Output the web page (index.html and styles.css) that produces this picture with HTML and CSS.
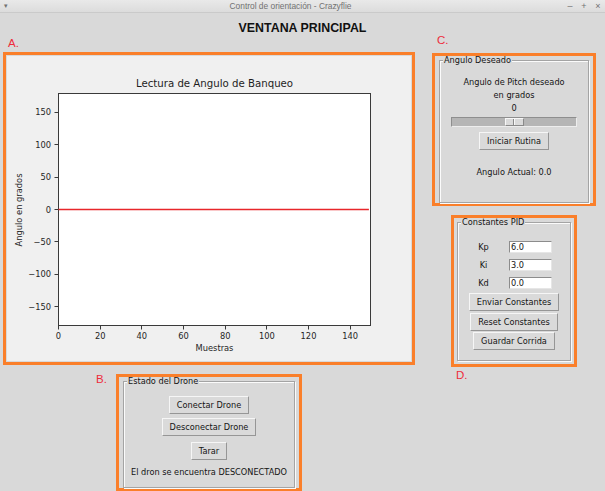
FILE: index.html
```html
<!DOCTYPE html>
<html lang="es">
<head>
<meta charset="utf-8">
<title>Control de orientación - Crazyflie</title>
<link rel="stylesheet" href="styles.css">
</head>
<body>
<div class="titlebar">
  <span class="tb-menu">▾</span>
  <span class="tb-title">Control de orientación - Crazyflie</span>
  <span class="tb-ctrls"><span>–</span><span>+</span><span>×</span></span>
</div>
<h1 class="heading">VENTANA PRINCIPAL</h1>
<div class="columns">
  <div class="col-left">
    <div class="mark mark-a">A.</div>
    <div class="box box-a">
      <div class="canvas">
        <svg class="plot" width="404" height="305" viewBox="7 56 404 305" xmlns="http://www.w3.org/2000/svg">
          <text class="p-title" x="214.5" y="87" text-anchor="middle">Lectura de Angulo de Banqueo</text>
          <rect x="58.5" y="93.5" width="312" height="232" fill="#ffffff" stroke="#3a3a3a" stroke-width="1"/>
          <line x1="58.5" y1="209.5" x2="368.9" y2="209.5" stroke="#e8262b" stroke-width="1.5"/>
          <g stroke="#3a3a3a" stroke-width="1">
            <line x1="54.5" y1="112.5" x2="58" y2="112.5"/>
            <line x1="54.5" y1="144.5" x2="58" y2="144.5"/>
            <line x1="54.5" y1="177.5" x2="58" y2="177.5"/>
            <line x1="54.5" y1="209.5" x2="58" y2="209.5"/>
            <line x1="54.5" y1="241.5" x2="58" y2="241.5"/>
            <line x1="54.5" y1="274.5" x2="58" y2="274.5"/>
            <line x1="54.5" y1="306.5" x2="58" y2="306.5"/>
            <line x1="58.5" y1="326" x2="58.5" y2="329.5"/>
            <line x1="100.5" y1="326" x2="100.5" y2="329.5"/>
            <line x1="141.5" y1="326" x2="141.5" y2="329.5"/>
            <line x1="183.5" y1="326" x2="183.5" y2="329.5"/>
            <line x1="225.5" y1="326" x2="225.5" y2="329.5"/>
            <line x1="266.5" y1="326" x2="266.5" y2="329.5"/>
            <line x1="308.5" y1="326" x2="308.5" y2="329.5"/>
            <line x1="350.5" y1="326" x2="350.5" y2="329.5"/>
          </g>
          <g class="p-tick" text-anchor="end">
            <text x="51" y="115.4">150</text>
            <text x="51" y="147.8">100</text>
            <text x="51" y="180.1">50</text>
            <text x="51" y="212.5">0</text>
            <text x="51" y="244.9">−50</text>
            <text x="51" y="277.2">−100</text>
            <text x="51" y="309.6">−150</text>
          </g>
          <g class="p-tick" text-anchor="middle">
            <text x="58.5" y="339">0</text>
            <text x="100.2" y="339">20</text>
            <text x="141.8" y="339">40</text>
            <text x="183.5" y="339">60</text>
            <text x="225.2" y="339">80</text>
            <text x="266.8" y="339">100</text>
            <text x="308.5" y="339">120</text>
            <text x="350.2" y="339">140</text>
          </g>
          <text class="p-label" x="214.5" y="350.7" text-anchor="middle">Muestras</text>
          <text class="p-label" x="19" y="213" text-anchor="middle" transform="rotate(-90 19 210)">Angulo en grados</text>
        </svg>
      </div>
    </div>
    <div class="row-b">
      <div class="mark mark-b">B.</div>
      <div class="box box-b">
        <fieldset class="frame">
          <legend>Estado del Drone</legend>
          <div class="frame-body body-b">
            <button class="btn">Conectar Drone</button>
            <button class="btn btn-b2">Desconectar Drone</button>
            <button class="btn btn-b3">Tarar</button>
            <div class="status">El dron se encuentra DESCONECTADO</div>
          </div>
        </fieldset>
      </div>
    </div>
  </div>
  <div class="col-right">
    <div class="mark mark-c">C.</div>
    <div class="box box-c">
      <fieldset class="frame">
        <legend>Angulo Deseado</legend>
        <div class="frame-body body-c">
          <div class="c-text">Angulo de Pitch deseado<br>en grados</div>
          <div class="c-text">0</div>
          <div class="scale"><div class="scale-handle"><div class="scale-grip"></div></div></div>
          <button class="btn btn-c">Iniciar Rutina</button>
          <div class="c-text c-actual">Angulo Actual: 0.0</div>
        </div>
      </fieldset>
    </div>
    <div class="box box-d">
      <fieldset class="frame">
        <legend>Constantes PID</legend>
        <div class="frame-body body-d">
          <div class="pid-grid">
            <span class="pid-label">Kp</span><span class="entry">6.0</span>
            <span class="pid-label">Ki</span><span class="entry">3.0</span>
            <span class="pid-label">Kd</span><span class="entry">0.0</span>
          </div>
          <button class="btn btn-d1">Enviar Constantes</button>
          <button class="btn btn-d2">Reset Constantes</button>
          <button class="btn btn-d3">Guardar Corrida</button>
        </div>
      </fieldset>
    </div>
    <div class="mark mark-d">D.</div>
  </div>
</div>
</body>
</html>
```
FILE: styles.css
```css
* { box-sizing: border-box; }
html, body { margin: 0; padding: 0; }
body {
  background: #d9d9d9;
  width: 605px;
  height: 491px;
  overflow: hidden;
  font-family: "DejaVu Sans", sans-serif;
  font-size: 8.2px;
  color: #141414;
}

/* title bar */
.titlebar {
  display: flex;
  align-items: center;
  height: 13px;
  background: linear-gradient(#e9e9e9, #dcdcdc);
  border-bottom: 1px solid #cacaca;
  color: #727272;
  font-family: "Liberation Sans", sans-serif;
  font-size: 8.4px;
  line-height: 12px;
}
.tb-menu { width: 18px; padding-right: 6px; text-align: center; font-size: 7px; }
.tb-title { flex: 1; text-align: center; }
.tb-ctrls { display: flex; width: 42px; }
.tb-ctrls span { width: 14px; text-align: center; font-size: 9px; }

.heading {
  margin: 0;
  padding-top: 9px;
  font-family: "Liberation Sans", sans-serif;
  font-weight: bold;
  font-size: 12.4px;
  line-height: 12px;
  text-align: center;
  color: #111;
}

.columns { display: flex; gap: 17px; }
.col-left { width: 415px; }
.col-right { width: 165px; }

.mark {
  font-family: "Liberation Sans", sans-serif;
  font-size: 11.5px;
  color: #ee2b3b;
}
.mark-a { line-height: 18px; padding-left: 8px; }
.mark-b { width: 20px; line-height: 11px; }
.mark-c { line-height: 12px; padding-left: 5px; margin-bottom: 7px; }
.mark-d { line-height: 16px; padding-left: 24px; }

.box { border: 3px solid #fa7f2a; }
.box-a { margin-left: 3px; width: 412px; height: 313px; padding: 1px; }
.canvas { width: 100%; height: 100%; background: #f0f0f0; }
.plot { display: block; }
.p-title { font-family: "DejaVu Sans", sans-serif; font-size: 10.2px; fill: #1e1e1e; }
.p-tick { font-family: "DejaVu Sans", sans-serif; font-size: 8.3px; fill: #262626; }
.p-label { font-family: "DejaVu Sans", sans-serif; font-size: 8.3px; fill: #262626; }

.row-b { display: flex; margin-top: 9px; padding-left: 96px; }
.box-b { width: 186px; height: 117px; padding: 0 4px; }
.box-c { width: 164px; height: 153px; padding: 0 4px; }
.box-d { width: 126px; height: 152px; margin: 9px 0 0 19px; padding: 0 3px 3px 3px; }

/* Tk labelframe */
.frame {
  margin: 0;
  padding: 0 3px;
  height: 100%;
  min-width: 0;
  border: 1px solid #a4a4a4;
  box-shadow: inset 1px 1px 0 #fbfbfb, 1px 1px 0 #fbfbfb;
}
.frame legend {
  padding: 0 1px;
  line-height: 8px;
  font-size: 8.2px;
  background: #d9d9d9;
}
.frame-body { display: flex; flex-direction: column; align-items: center; }
.body-b { padding-top: 11px; }
.body-c { padding-top: 12px; }
.body-d { padding-top: 15px; }

/* Tk button */
.btn {
  margin: 0;
  height: 18px;
  padding: 0 7px;
  font: inherit;
  line-height: 16px;
  color: inherit;
  background: #dadada;
  border: 1px solid;
  border-color: #f6f6f6 #969696 #969696 #f6f6f6;
}
.btn-b2 { margin-top: 4px; }
.btn-b3 { margin-top: 6px; }
.status { margin-top: 5.5px; line-height: 13px; }

.c-text { line-height: 13px; text-align: center; }
.c-actual { margin-top: 16px; }
.btn-c { margin-top: 5px; }

/* Tk scale */
.scale {
  margin-top: 2px;
  width: 126px;
  height: 10px;
  display: flex;
  justify-content: center;
  background: #b5b5b5;
  border: 1px solid;
  border-color: #8e8e8e #ededed #ededed #8e8e8e;
}
.scale-handle {
  width: 19px;
  height: 100%;
  display: flex;
  justify-content: center;
  background: #dadada;
  border: 1px solid;
  border-color: #f8f8f8 #8a8a8a #8a8a8a #f8f8f8;
}
.scale-grip { width: 2px; border-left: 1px solid #8a8a8a; border-right: 1px solid #f8f8f8; }

/* PID entries */
.pid-grid {
  align-self: flex-start;
  margin-left: 9px;
  display: grid;
  grid-template-columns: 27px 43px;
  column-gap: 12px;
  row-gap: 6px;
}
.pid-label { text-align: center; line-height: 12px; }
.entry {
  height: 12px;
  line-height: 10px;
  padding-left: 1px;
  background: #ffffff;
  border: 1px solid;
  border-color: #8c8c8c #e6e6e6 #e6e6e6 #8c8c8c;
}
.btn-d1 { margin-top: 4px; }
.btn-d2 { margin-top: 2px; }
.btn-d3 { margin-top: 1px; }
```
